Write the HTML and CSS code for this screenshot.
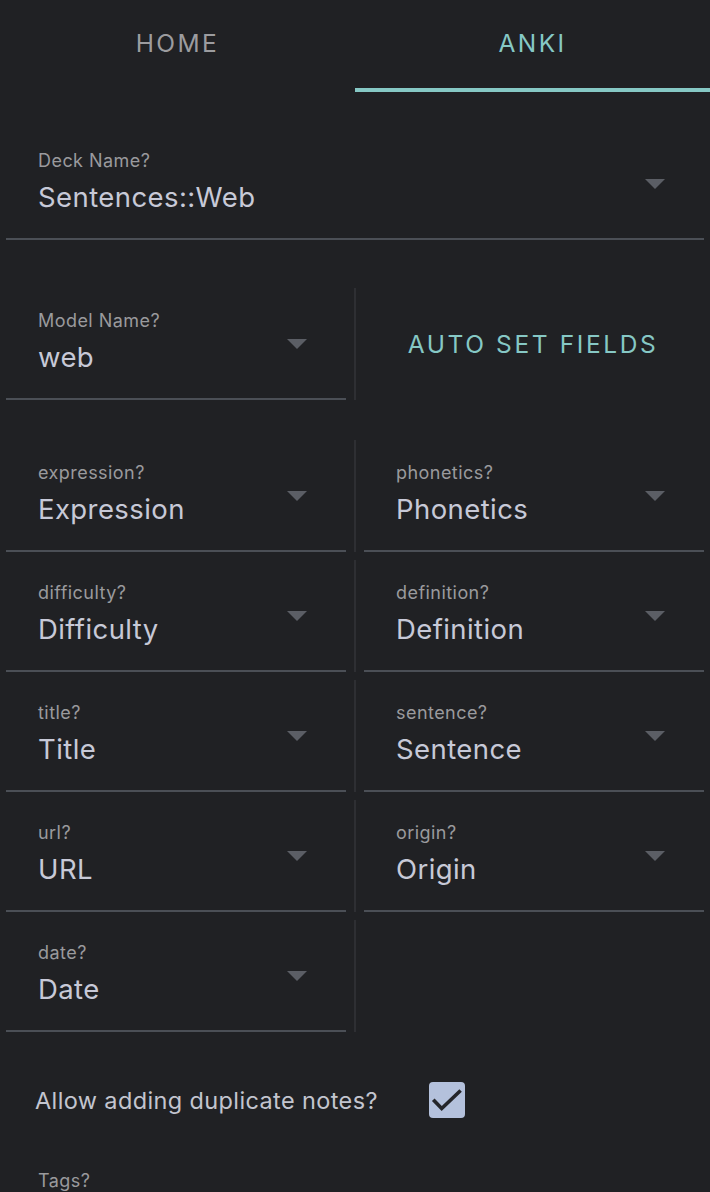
FILE: index.html
```html
<!DOCTYPE html>
<html lang="en">
<head>
<meta charset="utf-8">
<title>Anki settings</title>
<link rel="stylesheet" href="styles.css">
</head>
<body>
<nav class="tabs">
  <div class="tab">HOME</div>
  <div class="tab active">ANKI</div>
</nav>
<main class="form">
  <div class="deck-row">
    <div class="field">
      <div class="label">Deck Name?</div>
      <div class="value">Sentences::Web</div>
      <span class="arrow"></span>
    </div>
  </div>

  <div class="row model-row">
    <div class="field">
      <div class="label">Model Name?</div>
      <div class="value">web</div>
      <span class="arrow"></span>
    </div>
    <div class="divider"></div>
    <div class="action"><button class="btn">AUTO SET FIELDS</button></div>
  </div>

  <div class="fields">
    <div class="row">
      <div class="field"><div class="label">expression?</div><div class="value">Expression</div><span class="arrow"></span></div>
      <div class="divider"></div>
      <div class="field"><div class="label">phonetics?</div><div class="value">Phonetics</div><span class="arrow"></span></div>
    </div>
    <div class="row">
      <div class="field"><div class="label">difficulty?</div><div class="value">Difficulty</div><span class="arrow"></span></div>
      <div class="divider"></div>
      <div class="field"><div class="label">definition?</div><div class="value">Definition</div><span class="arrow"></span></div>
    </div>
    <div class="row">
      <div class="field"><div class="label">title?</div><div class="value">Title</div><span class="arrow"></span></div>
      <div class="divider"></div>
      <div class="field"><div class="label">sentence?</div><div class="value">Sentence</div><span class="arrow"></span></div>
    </div>
    <div class="row">
      <div class="field"><div class="label">url?</div><div class="value">URL</div><span class="arrow"></span></div>
      <div class="divider"></div>
      <div class="field"><div class="label">origin?</div><div class="value">Origin</div><span class="arrow"></span></div>
    </div>
    <div class="row">
      <div class="field"><div class="label">date?</div><div class="value">Date</div><span class="arrow"></span></div>
      <div class="divider"></div>
      <div></div>
    </div>
  </div>

  <label class="check-row">
    <span class="check-text">Allow adding duplicate notes?</span>
    <span class="checkbox">
      <svg width="36" height="36" viewBox="0 0 36 36"><polyline points="5.5,19 12.7,26.5 30.3,9.8" fill="none" stroke="#25262a" stroke-width="3.6" stroke-linecap="square"/></svg>
    </span>
  </label>

  <div class="tags">
    <div class="label">Tags?</div>
  </div>
</main>
</body>
</html>
```
FILE: styles.css
```css
* { box-sizing: border-box; }
html, body {
  margin: 0;
  padding: 0;
  background: #202124;
  font-family: Inter, "Noto Sans", "Liberation Sans", sans-serif;
  overflow: hidden;
}
.tabs {
  display: flex;
  height: 92px;
}
.tab {
  flex: 1;
  display: flex;
  align-items: center;
  justify-content: center;
  padding-bottom: 2px;
  border-bottom: 4px solid transparent;
  font-size: 24.5px;
  letter-spacing: 0.1em;
  color: #9c9c9f;
}
.tab.active {
  color: #86c8c5;
  border-bottom-color: #86c8c5;
}
.form {
  display: flex;
  flex-direction: column;
}
.deck-row {
  margin-top: 36px;
  padding: 0 6px;
}
.field {
  position: relative;
  height: 112px;
  padding: 22px 0 0 32px;
  border-bottom: 2px solid #4b4f56;
}
.label {
  font-size: 18px;
  line-height: 22px;
  letter-spacing: 0.025em;
  color: #9a9a9d;
}
.value {
  margin-top: 8px;
  font-size: 27.5px;
  line-height: 34px;
  letter-spacing: 0.015em;
  color: #c7c9d7;
}
.arrow {
  position: absolute;
  right: 39px;
  top: 51px;
  width: 0;
  height: 0;
  border-left: 10px solid transparent;
  border-right: 10px solid transparent;
  border-top: 10px solid #5b5e65;
}
.row {
  display: grid;
  grid-template-columns: 340px 2px 340px;
  column-gap: 8px;
  padding: 0 6px;
}
.divider {
  height: 112px;
  background: #2e2f33;
}
.model-row {
  margin-top: 48px;
}
.action {
  display: flex;
  align-items: center;
  justify-content: center;
  margin-left: -2px;
}
.btn {
  background: none;
  border: 0;
  padding: 0;
  font-family: inherit;
  font-size: 24.5px;
  letter-spacing: 0.106em;
  color: #86c8c5;
}
.fields {
  margin-top: 40px;
  display: flex;
  flex-direction: column;
  gap: 8px;
}
.check-row {
  margin-top: 50px;
  padding-left: 35px;
  display: flex;
  align-items: center;
  gap: 51px;
}
.check-text {
  font-size: 23.5px;
  color: #c3c5cf;
  letter-spacing: 0.016em;
}
.checkbox {
  width: 36px;
  height: 36px;
  border-radius: 4px;
  background: #b4c1dc;
  display: block;
}
.checkbox svg { display: block; }
.tags {
  margin-top: 52px;
  padding-left: 38px;
}
```
